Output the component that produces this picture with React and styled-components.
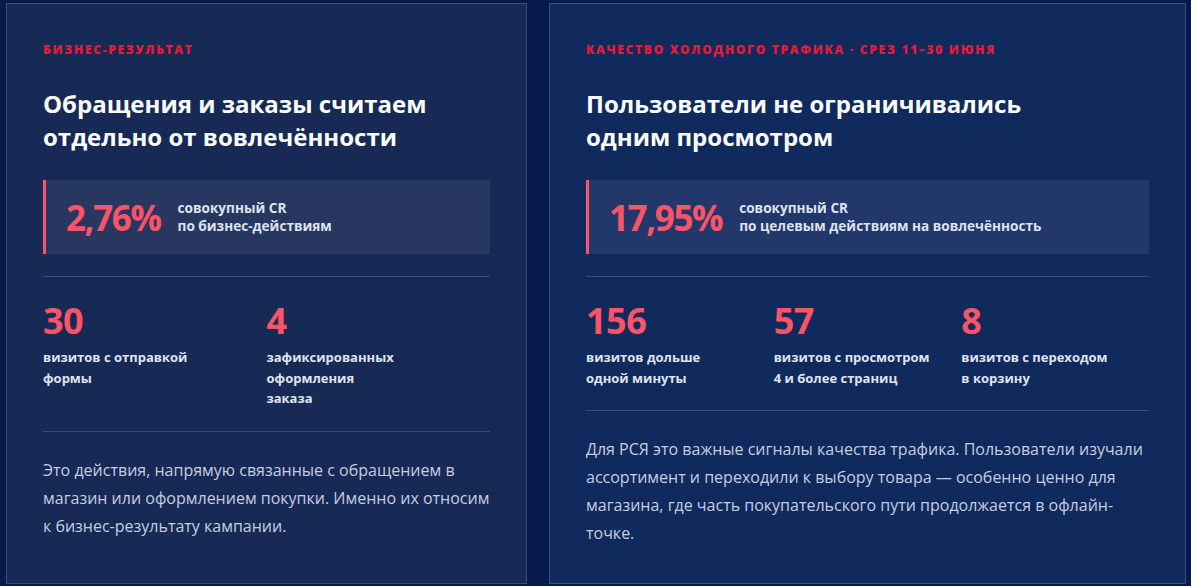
import React from 'react';
import styled, { createGlobalStyle } from 'styled-components';

const Global = createGlobalStyle`
    * { box-sizing: border-box; }
    html, body {
        margin: 0;
        padding: 0;
        background: #061b4b;
        font-family: "Open Sans", "Noto Sans", sans-serif;
    }
`
const Page = styled.div`
    display: grid;
    grid-template-columns: 521fr 637fr;
    gap: 22px;
    height: 586px;
    padding: 3px 5px 2px 6px;
`
const Card = styled.section`
    display: flex;
    flex-direction: column;
    padding: 38px 36px 36px;
    background: ${p => p.$tone === 'blue' ? '#102a5d' : '#172a56'};
    border: 1px solid #3a4e7c;
`
const Eyebrow = styled.p`
    margin: 0;
    font-size: 12px;
    line-height: 16px;
    font-weight: 800;
    letter-spacing: 1.7px;
    text-transform: uppercase;
    color: #eb1838;
`
const Title = styled.h2`
    margin: 29px 0 0;
    font-size: 24px;
    line-height: 33px;
    font-weight: 700;
    color: #ffffff;
`
const Highlight = styled.div`
    display: flex;
    align-items: center;
    gap: 17px;
    margin-top: 27px;
    height: 74px;
    padding: 0 20px;
    border-left: 3px solid #ff5468;
    background: ${p => p.$tone === 'blue' ? '#22386a' : '#27375f'};
`
const Percent = styled.span`
    font-size: 35px;
    line-height: 1;
    font-weight: 700;
    letter-spacing: -1.4px;
    color: #ff5468;
`
const Caption = styled.span`
    font-size: 13.6px;
    line-height: 18px;
    font-weight: 700;
    color: #dde3f2;
`
const Divider = styled.hr`
    margin: 22px 0 0;
    border: 0;
    border-top: 1px solid #3a4d78;
`
const Stats = styled.div`
    display: grid;
    grid-template-columns: repeat(${p => p.$cols}, 1fr);
    margin-top: 22px;
`
const Stat = styled.div`
    display: flex;
    flex-direction: column;
`
const Number = styled.span`
    font-size: 36px;
    line-height: 44px;
    font-weight: 700;
    letter-spacing: -0.5px;
    color: #ff5468;
`
const StatLabel = styled.span`
    margin-top: 4px;
    font-size: 13px;
    line-height: 20.5px;
    font-weight: 700;
    color: #dfe4f1;
`
const Text = styled.p`
    margin: 24px 0 0;
    font-size: 16px;
    line-height: 28px;
    color: #c6cde0;
`

const Lines = ({ lines }) => lines.map((l, i) => (
    <React.Fragment key={i}>{i > 0 && <br />}{l}</React.Fragment>
));

const cards = [
    {
        tone: 'navy',
        eyebrow: 'Бизнес-результат',
        title: ['Обращения и заказы считаем', 'отдельно от вовлечённости'],
        percent: '2,76%',
        caption: ['совокупный CR', 'по бизнес-действиям'],
        stats: [
            { value: '30', label: ['визитов с отправкой', 'формы'] },
            { value: '4', label: ['зафиксированных', 'оформления', 'заказа'] },
        ],
        text: 'Это действия, напрямую связанные с обращением в магазин или оформлением покупки. Именно их относим к бизнес-результату кампании.',
    },
    {
        tone: 'blue',
        eyebrow: 'Качество холодного трафика · срез 11–30 июня',
        title: ['Пользователи не ограничивались', 'одним просмотром'],
        percent: '17,95%',
        caption: ['совокупный CR', 'по целевым действиям на вовлечённость'],
        stats: [
            { value: '156', label: ['визитов дольше', 'одной минуты'] },
            { value: '57', label: ['визитов с просмотром', '4 и более страниц'] },
            { value: '8', label: ['визитов с переходом', 'в корзину'] },
        ],
        text: 'Для РСЯ это важные сигналы качества трафика. Пользователи изучали ассортимент и переходили к выбору товара — особенно ценно для магазина, где часть покупательского пути продолжается в офлайн-точке.',
    },
];

const App = () => {
    return (
        <>
            <Global />
            <Page>
                {cards.map(c => (
                    <Card key={c.percent} $tone={c.tone}>
                        <Eyebrow>{c.eyebrow}</Eyebrow>
                        <Title><Lines lines={c.title} /></Title>
                        <Highlight $tone={c.tone}>
                            <Percent>{c.percent}</Percent>
                            <Caption><Lines lines={c.caption} /></Caption>
                        </Highlight>
                        <Divider />
                        <Stats $cols={c.stats.length}>
                            {c.stats.map(s => (
                                <Stat key={s.value}>
                                    <Number>{s.value}</Number>
                                    <StatLabel><Lines lines={s.label} /></StatLabel>
                                </Stat>
                            ))}
                        </Stats>
                        <Divider />
                        <Text>{c.text}</Text>
                    </Card>
                ))}
            </Page>
        </>
    );
};

export default App;
